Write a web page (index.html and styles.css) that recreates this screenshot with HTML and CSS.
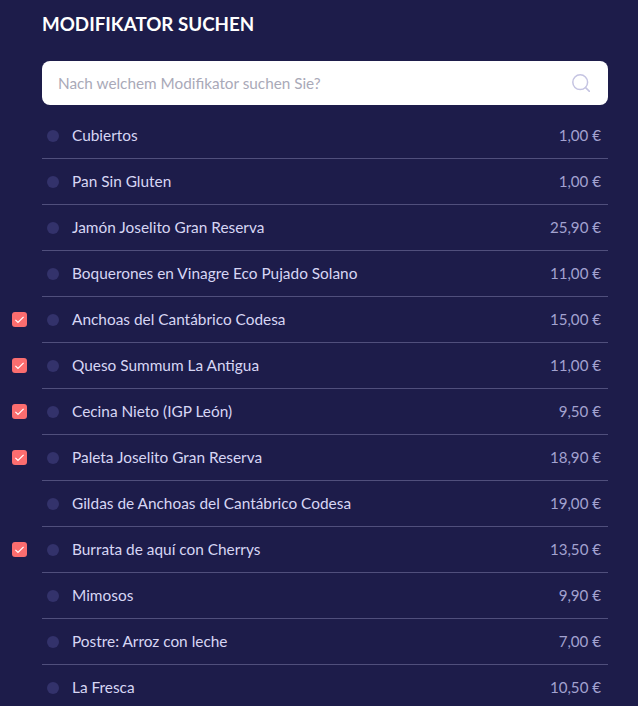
FILE: index.html
```html
<!DOCTYPE html>
<html lang="de">
<head>
<meta charset="utf-8">
<title>Modifikator suchen</title>
<link rel="stylesheet" href="styles.css">
</head>
<body>
<main class="panel">
  <h1 class="title">MODIFIKATOR SUCHEN</h1>
  <div class="search">
    <span class="search-text">Nach welchem Modifikator suchen Sie?</span>
    <svg class="search-icon" viewBox="0 0 18 18" width="18" height="18" fill="none" stroke="#c5c4e2" stroke-width="1.5"><circle cx="8.2" cy="8.2" r="7.4"/><path d="M13.6 13.6 17.4 17.4" stroke-linecap="round"/></svg>
  </div>
  <ul class="list">
    <li class="row"><span class="slot"></span><span class="dot"></span><span class="name">Cubiertos</span><span class="price">1,00 €</span></li>
    <li class="row"><span class="slot"></span><span class="dot"></span><span class="name">Pan Sin Gluten</span><span class="price">1,00 €</span></li>
    <li class="row"><span class="slot"></span><span class="dot"></span><span class="name">Jamón Joselito Gran Reserva</span><span class="price">25,90 €</span></li>
    <li class="row"><span class="slot"></span><span class="dot"></span><span class="name">Boquerones en Vinagre Eco Pujado Solano</span><span class="price">11,00 €</span></li>
    <li class="row"><span class="slot"><svg class="check" viewBox="0 0 15 15" width="15" height="15"><rect width="15" height="15" rx="3" fill="#fb6d6f"/><path d="M3.4 7.8 6 10.4 11.6 4.8" fill="none" stroke="#fff" stroke-width="1.2"/></svg></span><span class="dot"></span><span class="name">Anchoas del Cantábrico Codesa</span><span class="price">15,00 €</span></li>
    <li class="row"><span class="slot"><svg class="check" viewBox="0 0 15 15" width="15" height="15"><rect width="15" height="15" rx="3" fill="#fb6d6f"/><path d="M3.4 7.8 6 10.4 11.6 4.8" fill="none" stroke="#fff" stroke-width="1.2"/></svg></span><span class="dot"></span><span class="name">Queso Summum La Antigua</span><span class="price">11,00 €</span></li>
    <li class="row"><span class="slot"><svg class="check" viewBox="0 0 15 15" width="15" height="15"><rect width="15" height="15" rx="3" fill="#fb6d6f"/><path d="M3.4 7.8 6 10.4 11.6 4.8" fill="none" stroke="#fff" stroke-width="1.2"/></svg></span><span class="dot"></span><span class="name">Cecina Nieto (IGP León)</span><span class="price">9,50 €</span></li>
    <li class="row"><span class="slot"><svg class="check" viewBox="0 0 15 15" width="15" height="15"><rect width="15" height="15" rx="3" fill="#fb6d6f"/><path d="M3.4 7.8 6 10.4 11.6 4.8" fill="none" stroke="#fff" stroke-width="1.2"/></svg></span><span class="dot"></span><span class="name">Paleta Joselito Gran Reserva</span><span class="price">18,90 €</span></li>
    <li class="row"><span class="slot"></span><span class="dot"></span><span class="name">Gildas de Anchoas del Cantábrico Codesa</span><span class="price">19,00 €</span></li>
    <li class="row"><span class="slot"><svg class="check" viewBox="0 0 15 15" width="15" height="15"><rect width="15" height="15" rx="3" fill="#fb6d6f"/><path d="M3.4 7.8 6 10.4 11.6 4.8" fill="none" stroke="#fff" stroke-width="1.2"/></svg></span><span class="dot"></span><span class="name">Burrata de aquí con Cherrys</span><span class="price">13,50 €</span></li>
    <li class="row"><span class="slot"></span><span class="dot"></span><span class="name">Mimosos</span><span class="price">9,90 €</span></li>
    <li class="row"><span class="slot"></span><span class="dot"></span><span class="name">Postre: Arroz con leche</span><span class="price">7,00 €</span></li>
    <li class="row"><span class="slot"></span><span class="dot"></span><span class="name">La Fresca</span><span class="price">10,50 €</span></li>
  </ul>
</main>
</body>
</html>
```
FILE: styles.css
```css
html, body {
  margin: 0;
  padding: 0;
  height: 706px;
  overflow: hidden;
  background: #1d1c4a;
  font-family: "Lato", "Noto Sans", sans-serif;
}
.panel {
  padding: 0 30px 0 42px;
}
.title {
  margin: 0;
  padding-top: 11px;
  height: 61px;
  box-sizing: border-box;
  font-size: 18.75px;
  line-height: 25px;
  font-weight: 700;
  color: #fff;
}
.search {
  height: 44px;
  background: #fff;
  border-radius: 8px;
  display: flex;
  align-items: center;
  justify-content: space-between;
  padding: 0 18px 0 16px;
  box-sizing: border-box;
}
.search-text {
  font-size: 15.3px;
  line-height: 20px;
  margin-top: -1px;
  color: #a9a9b8;
}
.search-icon {
  display: block;
  flex: none;
}
.list {
  list-style: none;
  margin: 8px 0 0;
  padding: 0;
}
.row {
  position: relative;
  display: flex;
  align-items: center;
  height: 46px;
  box-sizing: border-box;
  border-bottom: 1px solid #504f7c;
  padding: 0 7px 0 5px;
  font-size: 15.4px;
}
.row:last-child {
  border-bottom: 0;
}
.slot {
  position: absolute;
  left: -30px;
  top: 15px;
  width: 15px;
  height: 15px;
}
.check {
  display: block;
}
.dot {
  width: 12px;
  height: 12px;
  border-radius: 50%;
  background: #33326b;
  flex: none;
  margin-right: 13px;
}
.name {
  flex: 1;
  line-height: 20px;
  margin-bottom: 2px;
  color: #d7d6f4;
}
.price {
  font-size: 15.1px;
  line-height: 20px;
  margin-bottom: 2px;
  color: #a3a2d0;
}
```
